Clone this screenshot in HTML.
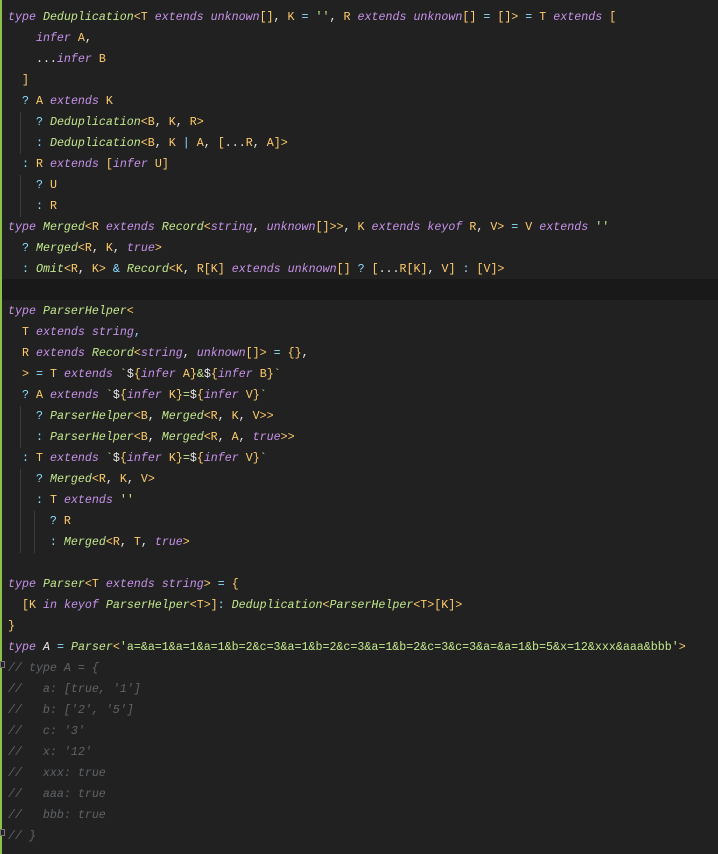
<!DOCTYPE html>
<html><head><style>
html,body{margin:0;padding:0;background:#212121;width:718px;height:854px;overflow:hidden}
#ed{position:relative;width:718px;height:854px;font-family:"Liberation Mono",monospace;font-size:11.65px;color:#d4d4d4}
.l{position:absolute;left:8px;height:21px;line-height:21px;white-space:pre}
.k{color:#c792ea;font-style:italic}
.n{color:#c3e88d;font-style:italic}
.t{color:#ffcb6b}
.o{color:#89ddff}
.s{color:#c3e88d}
.c{color:#5f6366;font-style:italic}
.w{color:#e8e8e8}
.g{position:absolute;width:1px;background:#3c3c3c}
#bar{position:absolute;left:0;top:0;width:2px;height:854px;background:#8bc34a}
#band{position:absolute;left:0;top:279px;width:718px;height:21px;background:#191919}
.f{position:absolute;left:0;width:5px;height:7px;border:1px solid #777;box-sizing:border-box;background:#212121}
</style></head><body><div id="ed">
<div id="band"></div>
<div id="bar"></div>
<div class="g" style="left:20px;top:112px;height:42px"></div>
<div class="g" style="left:20px;top:175px;height:42px"></div>
<div class="g" style="left:20px;top:406px;height:42px"></div>
<div class="g" style="left:20px;top:469px;height:84px"></div>
<div class="g" style="left:34px;top:511px;height:42px"></div>
<div class="l" style="top:7px"><span class="k">type</span> <span class="n">Deduplication</span><span class="t">&lt;T</span> <span class="k">extends</span> <span class="k">unknown</span><span class="t">[]</span><span class="w">,</span> <span class="t">K</span> <span class="o">=</span> <span class="s">''</span><span class="w">,</span> <span class="t">R</span> <span class="k">extends</span> <span class="k">unknown</span><span class="t">[]</span> <span class="o">=</span> <span class="t">[]&gt;</span> <span class="o">=</span> <span class="t">T</span> <span class="k">extends</span> <span class="t">[</span></div>
<div class="l" style="top:28px">    <span class="k">infer</span> <span class="t">A</span><span class="w">,</span></div>
<div class="l" style="top:49px">    <span class="w">...</span><span class="k">infer</span> <span class="t">B</span></div>
<div class="l" style="top:70px">  <span class="t">]</span></div>
<div class="l" style="top:91px">  <span class="o">?</span> <span class="t">A</span> <span class="k">extends</span> <span class="t">K</span></div>
<div class="l" style="top:112px">    <span class="o">?</span> <span class="n">Deduplication</span><span class="t">&lt;B</span><span class="w">,</span> <span class="t">K</span><span class="w">,</span> <span class="t">R&gt;</span></div>
<div class="l" style="top:133px">    <span class="o">:</span> <span class="n">Deduplication</span><span class="t">&lt;B</span><span class="w">,</span> <span class="t">K</span> <span class="o">|</span> <span class="t">A</span><span class="w">,</span> <span class="t">[</span><span class="w">...</span><span class="t">R</span><span class="w">,</span> <span class="t">A]&gt;</span></div>
<div class="l" style="top:154px">  <span class="o">:</span> <span class="t">R</span> <span class="k">extends</span> <span class="t">[</span><span class="k">infer</span> <span class="t">U]</span></div>
<div class="l" style="top:175px">    <span class="o">?</span> <span class="t">U</span></div>
<div class="l" style="top:196px">    <span class="o">:</span> <span class="t">R</span></div>
<div class="l" style="top:217px"><span class="k">type</span> <span class="n">Merged</span><span class="t">&lt;R</span> <span class="k">extends</span> <span class="n">Record</span><span class="t">&lt;</span><span class="k">string</span><span class="w">,</span> <span class="k">unknown</span><span class="t">[]&gt;&gt;</span><span class="w">,</span> <span class="t">K</span> <span class="k">extends</span> <span class="k">keyof</span> <span class="t">R</span><span class="w">,</span> <span class="t">V&gt;</span> <span class="o">=</span> <span class="t">V</span> <span class="k">extends</span> <span class="s">''</span></div>
<div class="l" style="top:238px">  <span class="o">?</span> <span class="n">Merged</span><span class="t">&lt;R</span><span class="w">,</span> <span class="t">K</span><span class="w">,</span> <span class="k">true</span><span class="t">&gt;</span></div>
<div class="l" style="top:259px">  <span class="o">:</span> <span class="n">Omit</span><span class="t">&lt;R</span><span class="w">,</span> <span class="t">K&gt;</span> <span class="o">&amp;</span> <span class="n">Record</span><span class="t">&lt;K</span><span class="w">,</span> <span class="t">R[K]</span> <span class="k">extends</span> <span class="k">unknown</span><span class="t">[]</span> <span class="o">?</span> <span class="t">[</span><span class="w">...</span><span class="t">R[K]</span><span class="w">,</span> <span class="t">V]</span> <span class="o">:</span> <span class="t">[V]&gt;</span></div>
<div class="l" style="top:301px"><span class="k">type</span> <span class="n">ParserHelper</span><span class="t">&lt;</span></div>
<div class="l" style="top:322px">  <span class="t">T</span> <span class="k">extends</span> <span class="k">string</span><span class="o">,</span></div>
<div class="l" style="top:343px">  <span class="t">R</span> <span class="k">extends</span> <span class="n">Record</span><span class="t">&lt;</span><span class="k">string</span><span class="w">,</span> <span class="k">unknown</span><span class="t">[]&gt;</span> <span class="o">=</span> <span class="t">{}</span><span class="w">,</span></div>
<div class="l" style="top:364px">  <span class="t">&gt;</span> <span class="o">=</span> <span class="t">T</span> <span class="k">extends</span> <span class="s">`</span><span class="w">$</span><span class="t">{</span><span class="k">infer</span> <span class="t">A}</span><span class="s">&amp;</span><span class="w">$</span><span class="t">{</span><span class="k">infer</span> <span class="t">B}</span><span class="s">`</span></div>
<div class="l" style="top:385px">  <span class="o">?</span> <span class="t">A</span> <span class="k">extends</span> <span class="s">`</span><span class="w">$</span><span class="t">{</span><span class="k">infer</span> <span class="t">K}</span><span class="s">=</span><span class="w">$</span><span class="t">{</span><span class="k">infer</span> <span class="t">V}</span><span class="s">`</span></div>
<div class="l" style="top:406px">    <span class="o">?</span> <span class="n">ParserHelper</span><span class="t">&lt;B</span><span class="w">,</span> <span class="n">Merged</span><span class="t">&lt;R</span><span class="w">,</span> <span class="t">K</span><span class="w">,</span> <span class="t">V&gt;&gt;</span></div>
<div class="l" style="top:427px">    <span class="o">:</span> <span class="n">ParserHelper</span><span class="t">&lt;B</span><span class="w">,</span> <span class="n">Merged</span><span class="t">&lt;R</span><span class="w">,</span> <span class="t">A</span><span class="w">,</span> <span class="k">true</span><span class="t">&gt;&gt;</span></div>
<div class="l" style="top:448px">  <span class="o">:</span> <span class="t">T</span> <span class="k">extends</span> <span class="s">`</span><span class="w">$</span><span class="t">{</span><span class="k">infer</span> <span class="t">K}</span><span class="s">=</span><span class="w">$</span><span class="t">{</span><span class="k">infer</span> <span class="t">V}</span><span class="s">`</span></div>
<div class="l" style="top:469px">    <span class="o">?</span> <span class="n">Merged</span><span class="t">&lt;R</span><span class="w">,</span> <span class="t">K</span><span class="w">,</span> <span class="t">V&gt;</span></div>
<div class="l" style="top:490px">    <span class="o">:</span> <span class="t">T</span> <span class="k">extends</span> <span class="s">''</span></div>
<div class="l" style="top:511px">      <span class="o">?</span> <span class="t">R</span></div>
<div class="l" style="top:532px">      <span class="o">:</span> <span class="n">Merged</span><span class="t">&lt;R</span><span class="w">,</span> <span class="t">T</span><span class="w">,</span> <span class="k">true</span><span class="t">&gt;</span></div>
<div class="l" style="top:574px"><span class="k">type</span> <span class="n">Parser</span><span class="t">&lt;T</span> <span class="k">extends</span> <span class="k">string</span><span class="t">&gt;</span> <span class="o">=</span> <span class="t">{</span></div>
<div class="l" style="top:595px">  <span class="t">[K</span> <span class="k">in</span> <span class="k">keyof</span> <span class="n">ParserHelper</span><span class="t">&lt;T&gt;]</span><span class="o">:</span> <span class="n">Deduplication</span><span class="t">&lt;</span><span class="n">ParserHelper</span><span class="t">&lt;T&gt;[K]&gt;</span></div>
<div class="l" style="top:616px"><span class="t">}</span></div>
<div class="l" style="top:637px"><span class="k">type</span> <span class="w" style="font-style:italic">A</span> <span class="o">=</span> <span class="n">Parser</span><span class="t">&lt;</span><span class="s">'a=&amp;a=1&amp;a=1&amp;a=1&amp;b=2&amp;c=3&amp;a=1&amp;b=2&amp;c=3&amp;a=1&amp;b=2&amp;c=3&amp;c=3&amp;a=&amp;a=1&amp;b=5&amp;x=12&amp;xxx&amp;aaa&amp;bbb'</span><span class="t">&gt;</span></div>
<div class="f" style="top:661px"></div>
<div class="f" style="top:829px"></div>
<div class="l c" style="top:658px">// type A = {</div>
<div class="l c" style="top:679px">//   a: [true, '1']</div>
<div class="l c" style="top:700px">//   b: ['2', '5']</div>
<div class="l c" style="top:721px">//   c: '3'</div>
<div class="l c" style="top:742px">//   x: '12'</div>
<div class="l c" style="top:763px">//   xxx: true</div>
<div class="l c" style="top:784px">//   aaa: true</div>
<div class="l c" style="top:805px">//   bbb: true</div>
<div class="l c" style="top:826px">// }</div>
</div></body></html>
